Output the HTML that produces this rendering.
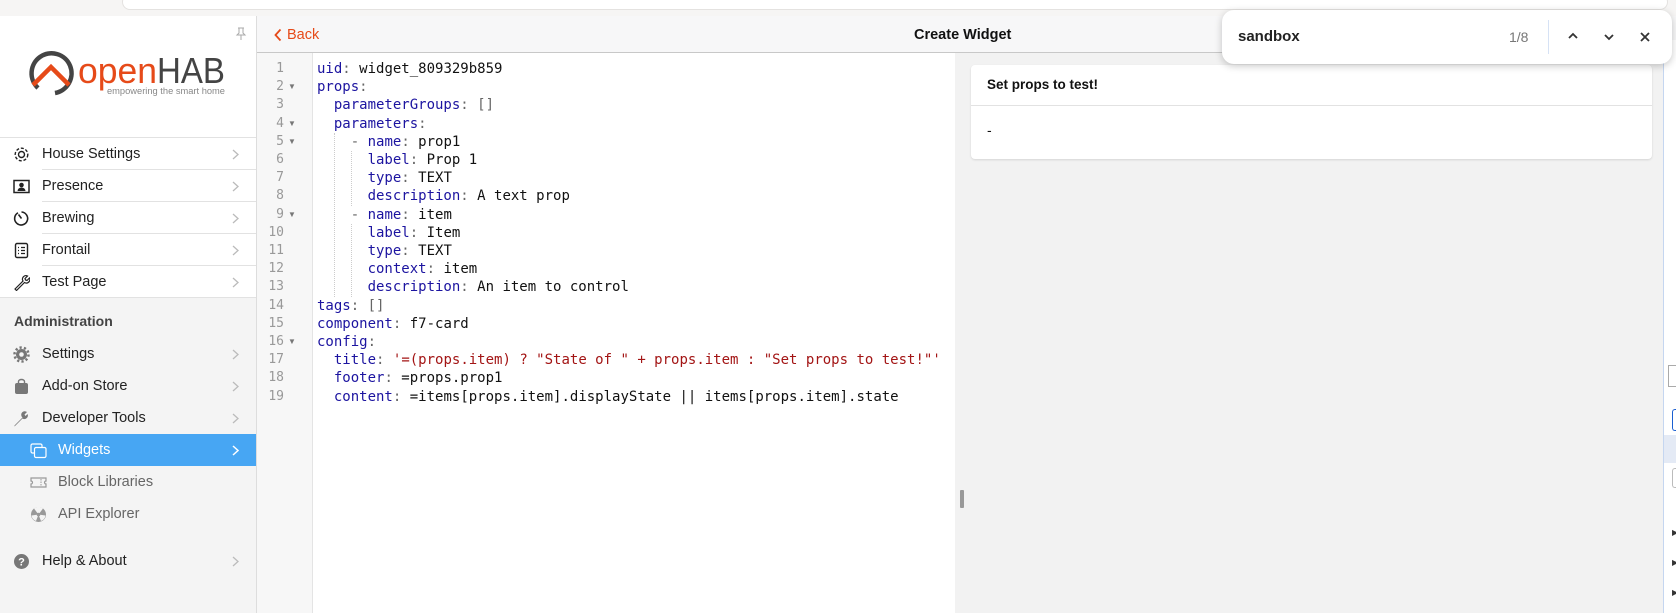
<!DOCTYPE html>
<html><head><meta charset="utf-8"><style>
*{box-sizing:border-box;margin:0;padding:0}
body{width:1676px;height:613px;overflow:hidden;background:#f2f2f2;font-family:"Liberation Sans","DejaVu Sans",sans-serif;position:relative;color:#222}
.abs{position:absolute}
#top{left:0;top:0;width:1676px;height:16px;background:#f6f5f4}
#topbar{left:122px;top:-6px;width:1546px;height:16px;background:#fff;border-radius:10px;border:1px solid #e4e2e0}
#side{left:0;top:16px;width:257px;height:597px;background:#fff;border-right:1px solid #ddd}
#sidegray{left:0;top:297px;width:256px;height:316px;background:#f4f4f4}
.item{position:absolute;left:0;width:256px;height:32px;font-size:14.5px;color:#222;line-height:32px}
.item .t{position:absolute;left:42px}
.item .ic{position:absolute;left:13px;top:8px;width:17px;height:17px}
.item .ch{position:absolute;left:232px;top:11px;width:7px;height:11px}
.sep{position:absolute;left:42px;width:214px;height:1px;background:#e2e2e2}
#nav{left:257px;top:16px;width:1419px;height:37px;background:#f7f7f8;border-bottom:1px solid #c8c8c8}
#gutter{left:257px;top:53px;width:56px;height:560px;background:#f7f7f7;border-right:1px solid #e4e4e4}
#code{left:313px;top:53px;width:642px;height:560px;background:#fff}
.ln{position:absolute;left:257px;width:27px;text-align:right;font-family:"DejaVu Sans Mono",monospace;font-size:13px;color:#999}
.fa{position:absolute;left:288px;font-size:8px;color:#777}
.cl{position:absolute;left:317px;font-family:"DejaVu Sans Mono",monospace;font-size:14px;white-space:pre;color:#111;line-height:18px}
.k{color:#1c14a0}.p{color:#666}.s{color:#a31515}
.guide{position:absolute;width:0;border-left:1px dotted #ccc}
</style></head><body>
<div id="top" class="abs"></div><div id="topbar" class="abs"></div>
<div id="side" class="abs"></div>
<div id="sidegray" class="abs"></div>
<svg class="abs" style="left:235px;top:27px" width="12" height="14" viewBox="0 0 12 14"><path d="M3 1h6M4 1v5L2 8h8L8 6V1M6 8v5" fill="none" stroke="#aaa" stroke-width="1"/></svg>
<svg class="abs" style="left:28px;top:48px" width="215" height="54" viewBox="0 0 215 54">
<path d="M10 40 A20 20 0 1 1 27 45" fill="none" stroke="#444" stroke-width="4.5"/>
<path d="M5 37 L23 19 L41 37" fill="none" stroke="#e64a19" stroke-width="4.5"/>
<text x="50" y="35" font-family="Liberation Sans,sans-serif" font-size="36" fill="#e64a19" textLength="79" lengthAdjust="spacingAndGlyphs">open</text>
<text x="129" y="35" font-family="Liberation Sans,sans-serif" font-size="36" fill="#444" textLength="68" lengthAdjust="spacingAndGlyphs">HAB</text>
<text x="79" y="46" font-family="Liberation Sans,sans-serif" font-size="9" fill="#888" textLength="118" lengthAdjust="spacingAndGlyphs">empowering the smart home</text>
</svg>
<div class="abs" style="left:0;top:137px;width:256px;height:1px;background:#e2e2e2"></div>

<div class="item" style="top:138px"><svg class="ic" viewBox="0 0 17 17"><circle cx="8.5" cy="8.5" r="3" fill="none" stroke="#222" stroke-width="1.4"/><circle cx="8.5" cy="8.5" r="6.3" fill="none" stroke="#222" stroke-width="1.4" stroke-dasharray="3 1.8"/></svg><span class="t">House Settings</span><svg class="ch" viewBox="0 0 7 11"><path d="M1 1l5 4.5L1 10" fill="none" stroke="#bbb" stroke-width="1.3"/></svg></div>
<div class="sep" style="top:169px"></div>
<div class="item" style="top:170px"><svg class="ic" viewBox="0 0 17 17"><rect x="1" y="2.5" width="15" height="12" fill="none" stroke="#222" stroke-width="1.5"/><circle cx="8.5" cy="7" r="2.3" fill="#222"/><path d="M4.5 13a4 3.5 0 0 1 8 0z" fill="#222"/></svg><span class="t">Presence</span><svg class="ch" viewBox="0 0 7 11"><path d="M1 1l5 4.5L1 10" fill="none" stroke="#bbb" stroke-width="1.3"/></svg></div>
<div class="sep" style="top:201px"></div>
<div class="item" style="top:202px"><svg class="ic" viewBox="0 0 17 17"><path d="M5 2.8A6.5 6.5 0 1 0 8.5 2" fill="none" stroke="#222" stroke-width="1.6"/><path d="M8.5 8.5L5.5 4.5" stroke="#222" stroke-width="1.6"/></svg><span class="t">Brewing</span><svg class="ch" viewBox="0 0 7 11"><path d="M1 1l5 4.5L1 10" fill="none" stroke="#bbb" stroke-width="1.3"/></svg></div>
<div class="sep" style="top:233px"></div>
<div class="item" style="top:234px"><svg class="ic" viewBox="0 0 17 17"><rect x="2.5" y="1.5" width="12" height="14" rx="1.5" fill="none" stroke="#222" stroke-width="1.4"/><path d="M5 5.5h1M8 5.5h4M5 8.5h1M8 8.5h4M5 11.5h1M8 11.5h4" stroke="#222" stroke-width="1.3"/></svg><span class="t">Frontail</span><svg class="ch" viewBox="0 0 7 11"><path d="M1 1l5 4.5L1 10" fill="none" stroke="#bbb" stroke-width="1.3"/></svg></div>
<div class="sep" style="top:265px"></div>
<div class="item" style="top:266px"><svg class="ic" viewBox="0 0 17 17"><path d="M2 15l8-8a3.5 3.5 0 0 1 4.5-5L12 4.5l.5 1.5 1.5.5 2.5-2.5a3.5 3.5 0 0 1-5 4.5l-8 8z" fill="none" stroke="#222" stroke-width="1.2"/></svg><span class="t">Test Page</span><svg class="ch" viewBox="0 0 7 11"><path d="M1 1l5 4.5L1 10" fill="none" stroke="#bbb" stroke-width="1.3"/></svg></div>
<div class="abs" style="left:0;top:297px;width:256px;height:1px;background:#e2e2e2"></div>

<div class="abs" style="left:14px;top:313px;font-size:14px;font-weight:bold;color:#444">Administration</div>
<div class="item" style="top:338px"><svg class="ic" viewBox="0 0 17 17"><circle cx="8.5" cy="8.5" r="5.5" fill="#777"/><circle cx="8.5" cy="8.5" r="7" fill="none" stroke="#777" stroke-width="2.5" stroke-dasharray="2.2 2.2"/><circle cx="8.5" cy="8.5" r="2.3" fill="#f4f4f4"/></svg><span class="t">Settings</span><svg class="ch" viewBox="0 0 7 11"><path d="M1 1l5 4.5L1 10" fill="none" stroke="#bbb" stroke-width="1.3"/></svg></div>
<div class="item" style="top:370px"><svg class="ic" viewBox="0 0 17 17"><rect x="2" y="5" width="13" height="11" rx="2" fill="#777"/><path d="M5.5 5V3.5a3 2 0 0 1 6 0V5" fill="none" stroke="#777" stroke-width="1.4"/></svg><span class="t">Add-on Store</span><svg class="ch" viewBox="0 0 7 11"><path d="M1 1l5 4.5L1 10" fill="none" stroke="#bbb" stroke-width="1.3"/></svg></div>
<div class="item" style="top:402px"><svg class="ic" viewBox="0 0 17 17"><path d="M1.5 15.5l8-8a3.5 3.5 0 0 1 4.5-5.5L11.5 4.5l1 1.5 2-2a3.5 3.5 0 0 1-5 4.5l-8 8z" fill="#777"/></svg><span class="t">Developer Tools</span><svg class="ch" viewBox="0 0 7 11"><path d="M1 1l5 4.5L1 10" fill="none" stroke="#bbb" stroke-width="1.3"/></svg></div>
<div class="item" style="top:434px;background:#47a6f3;color:#fff"><svg class="ic" style="left:30px" viewBox="0 0 17 17"><rect x="1" y="2" width="11" height="9" rx="1.5" fill="none" stroke="#fff" stroke-width="1.2"/><rect x="4.5" y="5.5" width="11.5" height="10" rx="1.5" fill="#47a6f3" stroke="#fff" stroke-width="1.2"/></svg><span class="t" style="left:58px">Widgets</span><svg class="ch" viewBox="0 0 7 11"><path d="M1 1l5 4.5L1 10" fill="none" stroke="#fff" stroke-width="1.5"/></svg></div>
<div class="item" style="top:466px;color:#666"><svg class="ic" style="left:30px" viewBox="0 0 17 17"><path d="M1 4h15v3a1.5 1.5 0 0 0 0 3v3H1v-3a1.5 1.5 0 0 0 0-3z" fill="none" stroke="#999" stroke-width="1.2"/><path d="M11 5v7" stroke="#999" stroke-dasharray="1.5 1"/></svg><span class="t" style="left:58px">Block Libraries</span></div>
<div class="item" style="top:498px;color:#666"><svg class="ic" style="left:30px" viewBox="0 0 17 17"><circle cx="8.5" cy="8.5" r="7.5" fill="#999"/><path d="M8.5 8.5L4 2.5A7 7 0 0 1 13 2.5zM8.5 8.5L15.5 9.5A7 7 0 0 1 11 15zM8.5 8.5L6 15A7 7 0 0 1 1.5 9.5z" fill="#f4f4f4"/><circle cx="8.5" cy="8.5" r="1.8" fill="#999"/></svg><span class="t" style="left:58px">API Explorer</span></div>
<div class="item" style="top:545px"><svg class="ic" viewBox="0 0 17 17"><circle cx="8.5" cy="8.5" r="7.5" fill="#777"/><text x="8.5" y="12.5" text-anchor="middle" font-size="11" font-weight="bold" fill="#fff" font-family="Liberation Sans">?</text></svg><span class="t">Help &amp; About</span><svg class="ch" viewBox="0 0 7 11"><path d="M1 1l5 4.5L1 10" fill="none" stroke="#bbb" stroke-width="1.3"/></svg></div>

<div id="nav" class="abs"></div>
<svg class="abs" style="left:274px;top:28px" width="8" height="14" viewBox="0 0 8 14"><path d="M6.5 1.5L1.5 7l5 5.5" fill="none" stroke="#e64a19" stroke-width="1.8"/></svg>
<div class="abs" style="left:287px;top:27px;font-size:14.5px;color:#e64a19">Back</div>
<div class="abs" style="left:914px;top:27px;font-size:14.5px;font-weight:bold;color:#111">Create Widget</div>

<div id="gutter" class="abs"></div>
<div id="code" class="abs"></div>

<div id="lines"></div>
<script>
var L=[
['<span class="k">uid</span><span class="p">:</span> widget_809329b859',0],
['<span class="k">props</span><span class="p">:</span>',1],
['  <span class="k">parameterGroups</span><span class="p">: []</span>',0],
['  <span class="k">parameters</span><span class="p">:</span>',1],
['    <span class="p">-</span> <span class="k">name</span><span class="p">:</span> prop1',1],
['      <span class="k">label</span><span class="p">:</span> Prop 1',0],
['      <span class="k">type</span><span class="p">:</span> TEXT',0],
['      <span class="k">description</span><span class="p">:</span> A text prop',0],
['    <span class="p">-</span> <span class="k">name</span><span class="p">:</span> item',1],
['      <span class="k">label</span><span class="p">:</span> Item',0],
['      <span class="k">type</span><span class="p">:</span> TEXT',0],
['      <span class="k">context</span><span class="p">:</span> item',0],
['      <span class="k">description</span><span class="p">:</span> An item to control',0],
['<span class="k">tags</span><span class="p">: []</span>',0],
['<span class="k">component</span><span class="p">:</span> f7-card',0],
['<span class="k">config</span><span class="p">:</span>',1],
['  <span class="k">title</span><span class="p">:</span> <span class="s">\'=(props.item) ? "State of " + props.item : "Set props to test!"\'</span>',0],
['  <span class="k">footer</span><span class="p">:</span> =props.prop1',0],
['  <span class="k">content</span><span class="p">:</span> =items[props.item].displayState || items[props.item].state',0]];
var h='';
for(var i=0;i<L.length;i++){var y=60+i*18.2;
h+='<div class="ln" style="top:'+(y+1)+'px">'+(i+1)+'</div>';
if(L[i][1])h+='<div class="fa" style="top:'+(y+4)+'px">&#9660;</div>';
h+='<div class="cl" style="top:'+y+'px">'+L[i][0]+'</div>';}
document.getElementById('lines').innerHTML=h;
</script>
<div class="guide" style="left:334px;top:133px;height:164px"></div>
<div class="guide" style="left:351px;top:151px;height:55px"></div>
<div class="guide" style="left:351px;top:224px;height:73px"></div>

<div class="abs" style="left:960px;top:490px;width:4px;height:18px;background:#999;border-radius:1px"></div>

<div class="abs" style="left:971px;top:65px;width:681px;height:94px;background:#fff;border-radius:4px;box-shadow:0 1px 2px rgba(0,0,0,.12)"></div>
<div class="abs" style="left:971px;top:105px;width:681px;height:1px;background:#e2e2e2"></div>
<div class="abs" style="left:987px;top:77px;font-size:13.5px;font-weight:bold;color:#111">Set props to test!</div>
<div class="abs" style="left:987px;top:122px;font-size:14px;color:#111">-</div>

<div class="abs" style="left:1663px;top:40px;width:13px;height:573px;background:#fff;border-left:1px solid #c5d6f0"></div>
<div class="abs" style="left:1668px;top:365px;width:8px;height:22px;border:1px solid #aaa;border-right:none"></div>
<div class="abs" style="left:1672px;top:409px;width:6px;height:22px;border:1.5px solid #1a5fd1;border-right:none;border-radius:3px 0 0 3px"></div>
<div class="abs" style="left:1664px;top:435px;width:12px;height:28px;background:#e4eaf5"></div>
<div class="abs" style="left:1672px;top:468px;width:6px;height:20px;border:1px solid #bbb;border-right:none;border-radius:3px 0 0 3px"></div>
<div class="abs" style="left:1672px;top:528px;font-size:8px;color:#333">&#9654;</div>
<div class="abs" style="left:1672px;top:558px;font-size:8px;color:#333">&#9654;</div>
<div class="abs" style="left:1672px;top:588px;font-size:8px;color:#333">&#9654;</div>

<div class="abs" style="left:1222px;top:10px;width:450px;height:54px;background:#fff;border-radius:12px;box-shadow:0 2px 8px rgba(0,0,0,.22)"></div>
<div class="abs" style="left:1238px;top:28px;font-size:15px;font-weight:bold;color:#222">sandbox</div>
<div class="abs" style="left:1509px;top:29px;font-size:14px;color:#777">1/8</div>
<div class="abs" style="left:1548px;top:20px;width:1px;height:34px;background:#d6e2f5"></div>
<svg class="abs" style="left:1567px;top:31px" width="12" height="10" viewBox="0 0 12 10"><path d="M2 7l4-4 4 4" fill="none" stroke="#333" stroke-width="1.8"/></svg>
<svg class="abs" style="left:1603px;top:32px" width="12" height="10" viewBox="0 0 12 10"><path d="M2 3l4 4 4-4" fill="none" stroke="#333" stroke-width="1.8"/></svg>
<svg class="abs" style="left:1639px;top:31px" width="12" height="12" viewBox="0 0 12 12"><path d="M2 2l8 8M10 2l-8 8" fill="none" stroke="#333" stroke-width="1.8"/></svg>
</body></html>
